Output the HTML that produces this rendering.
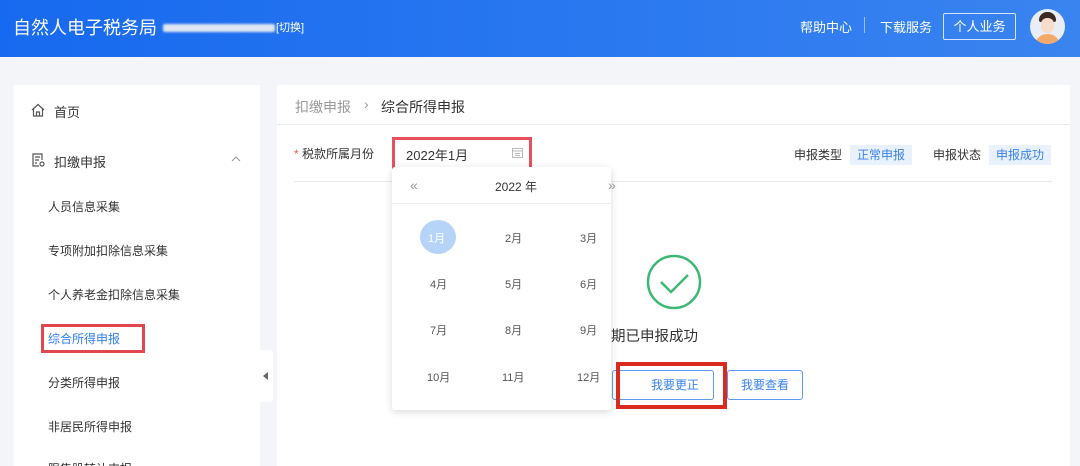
<!DOCTYPE html>
<html style="width:1080px;height:466px;overflow:hidden"><head><meta charset="utf-8"><style>
*{margin:0;padding:0;box-sizing:border-box}
body{width:1080px;height:466px;overflow:hidden;background:#f3f5f8;font-family:"Liberation Sans","Noto Sans CJK SC",sans-serif;position:relative;color:#333}
.a{position:absolute}
.hdr{left:0;top:0;width:1080px;height:57px;background:linear-gradient(90deg,#1769ef,#2f7cf0 70%,#3a84ef)}
.t{white-space:nowrap}
</style></head><body>
<div class="a hdr"></div>
<div class="a t" style="left:13px;top:14px;font-size:18px;color:#fff">自然人电子税务局</div>
<div class="a" style="left:163px;top:24px;width:112px;height:8px;background:#dfe6f2;border-radius:2px;filter:blur(1px)"></div>
<div class="a t" style="left:276px;top:19px;font-size:11px;color:#fff">[切换]</div>
<div class="a t" style="left:800px;top:17px;font-size:13px;color:#fff">帮助中心</div>
<div class="a" style="left:864px;top:17px;width:1px;height:16px;background:#9cc0f5"></div>
<div class="a t" style="left:880px;top:17px;font-size:13px;color:#fff">下载服务</div>
<div class="a t" style="left:943px;top:13px;width:73px;height:27px;border:1px solid #d6e4fb;border-radius:2px;color:#fff;font-size:13px;text-align:center;line-height:25px">个人业务</div>
<div class="a" style="left:1030px;top:9px;width:35px;height:35px;border-radius:50%;background:#e9eef6;overflow:hidden">
<div class="a" style="left:9px;top:3px;width:17px;height:10px;border-radius:8px 8px 2px 2px;background:#3a2a22"></div>
<div class="a" style="left:11px;top:9px;width:13px;height:15px;border-radius:6px;background:#f8dccb"></div>
<div class="a" style="left:5px;top:25px;width:25px;height:14px;border-radius:12px 12px 0 0;background:#f4a96a"></div>
</div>

<div class="a" style="left:14px;top:85px;width:246px;height:381px;background:#fff;overflow:hidden">
<div class="a t" style="left:34px;top:375px;font-size:12px">限售股转让申报</div>
</div>
<svg class="a" style="left:30px;top:102px" width="16" height="16" viewBox="0 0 16 16" fill="none" stroke="#555" stroke-width="1.2"><path d="M2 8L8 2.5 14 8M3.5 6.8V14h9V6.8M6.5 14v-4h3v4"/></svg>
<div class="a t" style="left:54px;top:102px;font-size:13px">首页</div>
<svg class="a" style="left:30px;top:152px" width="16" height="16" viewBox="0 0 16 16" fill="none" stroke="#555" stroke-width="1.2"><path d="M9 14H3V2h9v6M5 5h5M5 8h4M5 11h2"/><circle cx="12" cy="12" r="2"/></svg>
<div class="a t" style="left:54px;top:152px;font-size:13px">扣缴申报</div>
<svg class="a" style="left:231px;top:155px" width="10" height="8" viewBox="0 0 10 8" fill="none" stroke="#999"><path d="M1 6l4-4 4 4"/></svg>
<div class="a t" style="left:48px;top:198px;font-size:12px">人员信息采集</div>
<div class="a t" style="left:48px;top:242px;font-size:12px">专项附加扣除信息采集</div>
<div class="a t" style="left:48px;top:286px;font-size:12px">个人养老金扣除信息采集</div>
<div class="a t" style="left:48px;top:330px;font-size:12px;color:#2f7ef0">综合所得申报</div>
<div class="a" style="left:41px;top:324px;width:104px;height:29px;border:3px solid #e2474f"></div>
<div class="a t" style="left:48px;top:374px;font-size:12px">分类所得申报</div>
<div class="a t" style="left:48px;top:418px;font-size:12px">非居民所得申报</div>
<div class="a" style="left:260px;top:350px;width:13px;height:52px;background:#fff;border-radius:0 3px 3px 0"></div>
<div class="a" style="left:263px;top:372px;border:4px solid transparent;border-right:5px solid #666;border-left:0"></div>

<div class="a" style="left:277px;top:85px;width:793px;height:381px;background:#fff"></div>
<div class="a" style="left:277px;top:124px;width:793px;height:1px;background:#e8ebef"></div>
<div class="a t" style="left:295px;top:97px;font-size:14px;color:#999">扣缴申报</div>
<div class="a t" style="left:364px;top:96px;font-size:14px;color:#999">›</div>
<div class="a t" style="left:381px;top:97px;font-size:14px;color:#333">综合所得申报</div>
<div class="a t" style="left:294px;top:145px;font-size:12px"><span style="color:#e55">*</span> 税款所属月份</div>
<div class="a t" style="left:406px;top:145px;font-size:13px">2022年1月</div>
<svg class="a" style="left:512px;top:147px" width="11" height="11" viewBox="0 0 11 11" fill="none" stroke="#bbb"><rect x="0.5" y="1.5" width="10" height="9"/><path d="M1 4h9M3 6.5h5M3 8.5h5"/></svg>
<div class="a" style="left:392px;top:137px;width:140px;height:41px;border:3px solid #e5505a"></div>
<div class="a t" style="left:794px;top:146px;font-size:12px">申报类型</div>
<div class="a t" style="left:850px;top:145px;width:62px;height:20px;background:#e8f1fc;color:#3b82e8;font-size:12px;text-align:center;line-height:20px">正常申报</div>
<div class="a t" style="left:933px;top:146px;font-size:12px">申报状态</div>
<div class="a t" style="left:989px;top:145px;width:62px;height:20px;background:#e8f1fc;color:#3b82e8;font-size:12px;text-align:center;line-height:20px">申报成功</div>
<div class="a" style="left:294px;top:181px;width:758px;height:1px;background:#e6e8eb"></div>

<svg class="a" style="left:645px;top:253px" width="58" height="58" viewBox="0 0 58 58" fill="none" stroke="#3cb874" stroke-width="2.5"><circle cx="29" cy="29" r="26"/><path d="M16 29l10 10 17-17"/></svg>
<div class="a t" style="right:382px;top:325px;font-size:14.5px;color:#333">税款所属期已申报成功</div>
<div class="a t" style="left:612px;top:370px;width:102px;height:30px;border:1px solid #5b9bf0;border-radius:3px;color:#3a82ee;font-size:12px;text-align:center;line-height:28px;padding-left:24px">我要更正</div>
<div class="a t" style="left:727px;top:370px;width:76px;height:30px;border:1px solid #5b9bf0;border-radius:3px;color:#3a82ee;font-size:12px;text-align:center;line-height:28px">我要查看</div>
<div class="a" style="left:616px;top:362px;width:111px;height:47px;border:4px solid #d92a20"></div>

<div class="a" style="left:392px;top:167px;width:219px;height:243px;background:#fff;border-radius:3px;box-shadow:0 2px 8px rgba(0,0,0,.15)"></div>
<div class="a" style="left:392px;top:203px;width:219px;height:1px;background:#eee"></div>
<div class="a t" style="left:410px;top:177px;font-size:14px;color:#999">«</div>
<div class="a t" style="left:608px;top:177px;font-size:14px;color:#999">»</div>
<div class="a t" style="left:495px;top:178px;font-size:12px">2022 年</div>
<div class="a" style="left:420px;top:220px;width:36px;height:34px;border-radius:50%;background:#b6d3f8"></div>
<div class="a" style="left:0;top:0;font-size:11px;color:#555">
<div class="a t" style="left:428px;top:230px;color:#fff">1月</div>
<div class="a t" style="left:505px;top:230px">2月</div>
<div class="a t" style="left:580px;top:230px">3月</div>
<div class="a t" style="left:430px;top:276px">4月</div>
<div class="a t" style="left:505px;top:276px">5月</div>
<div class="a t" style="left:580px;top:276px">6月</div>
<div class="a t" style="left:430px;top:322px">7月</div>
<div class="a t" style="left:505px;top:322px">8月</div>
<div class="a t" style="left:580px;top:322px">9月</div>
<div class="a t" style="left:427px;top:369px">10月</div>
<div class="a t" style="left:502px;top:369px">11月</div>
<div class="a t" style="left:577px;top:369px">12月</div>
</div>
</body></html>
